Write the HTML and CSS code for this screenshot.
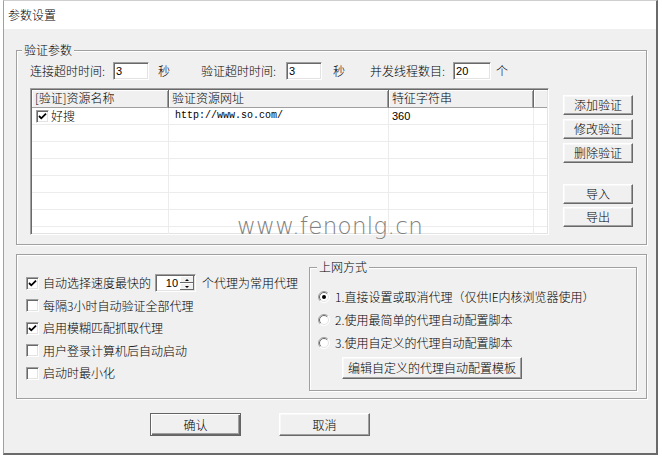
FILE: index.html
```html
<!DOCTYPE html>
<html>
<head>
<meta charset="utf-8">
<title>参数设置</title>
<link rel="stylesheet" href="styles.css">
</head>
<body>
<div class="window">
  <div class="titlebar">参数设置</div>
  <div class="client">
    <div class="group g-verify">
      <div class="legend">验证参数</div>
      <div class="params">
        <span class="lbl l1">连接超时时间:</span><span class="edit e1">3</span><span class="unit u1">秒</span>
        <span class="lbl l2">验证超时时间:</span><span class="edit e2">3</span><span class="unit u2">秒</span>
        <span class="lbl l3">并发线程数目:</span><span class="edit e3">20</span><span class="unit u3">个</span>
      </div>
      <div class="list-area">
        <div class="listview">
          <div class="lv-head">
            <div class="hc c1">[验证]资源名称</div>
            <div class="hc c2">验证资源网址</div>
            <div class="hc c3">特征字符串</div>
            <div class="hc c4"></div>
          </div>
          <div class="lv-row">
            <div class="cell c1 first"><span class="chk on"><svg width="9" height="9" viewBox="0 0 9 9"><path d="M1 4 L3.3 6.3 L8 1.6" fill="none" stroke="#000" stroke-width="1.8"/></svg></span>好搜</div>
            <div class="cell c2 mono">http://www.so.com/</div>
            <div class="cell c3 num">360</div>
            <div class="cell c4"></div>
          </div>
          <div class="lv-row"><div class="cell c1"></div><div class="cell c2"></div><div class="cell c3"></div><div class="cell c4"></div></div>
          <div class="lv-row"><div class="cell c1"></div><div class="cell c2"></div><div class="cell c3"></div><div class="cell c4"></div></div>
          <div class="lv-row"><div class="cell c1"></div><div class="cell c2"></div><div class="cell c3"></div><div class="cell c4"></div></div>
          <div class="lv-row"><div class="cell c1"></div><div class="cell c2"></div><div class="cell c3"></div><div class="cell c4"></div></div>
          <div class="lv-row"><div class="cell c1"></div><div class="cell c2"></div><div class="cell c3"></div><div class="cell c4"></div></div>
          <div class="lv-row"><div class="cell c1"></div><div class="cell c2"></div><div class="cell c3"></div><div class="cell c4"></div></div>
          <div class="lv-row"><div class="cell c1"></div><div class="cell c2"></div><div class="cell c3"></div><div class="cell c4"></div></div>
        </div>
        <div class="side">
          <button class="btn sbtn">添加验证</button>
          <button class="btn sbtn gap4">修改验证</button>
          <button class="btn sbtn gap4">删除验证</button>
          <button class="btn sbtn gap21">导入</button>
          <button class="btn sbtn gap3">导出</button>
        </div>
      </div>
      <div class="watermark">www.fenonlg.cn</div>
    </div>

    <div class="group g-options">
      <div class="checks">
        <div class="crow"><span class="chk on"><svg width="9" height="9" viewBox="0 0 9 9"><path d="M1 4 L3.3 6.3 L8 1.6" fill="none" stroke="#000" stroke-width="1.8"/></svg></span><span>自动选择速度最快的</span><span class="spin"><span class="spin-val">10</span><span class="spin-btns"><span class="sb up"></span><span class="sb down"></span></span></span><span>个代理为常用代理</span></div>
        <div class="crow"><span class="chk"></span><span>每隔3小时自动验证全部代理</span></div>
        <div class="crow"><span class="chk on"><svg width="9" height="9" viewBox="0 0 9 9"><path d="M1 4 L3.3 6.3 L8 1.6" fill="none" stroke="#000" stroke-width="1.8"/></svg></span><span>启用模糊匹配抓取代理</span></div>
        <div class="crow"><span class="chk"></span><span>用户登录计算机后自动启动</span></div>
        <div class="crow"><span class="chk"></span><span>启动时最小化</span></div>
      </div>
      <div class="group g-net">
        <div class="legend">上网方式</div>
        <div class="radios">
          <div class="rrow"><svg class="radio" width="12" height="12" viewBox="0 0 12 12"><circle cx="6" cy="6" r="5.5" fill="#fff"/><path d="M2.1 9.9 A5.5 5.5 0 0 1 9.9 2.1" fill="none" stroke="#a0a0a0"/><path d="M9.9 2.1 A5.5 5.5 0 0 1 2.1 9.9" fill="none" stroke="#fff"/><path d="M2.8 9.2 A4.5 4.5 0 0 1 9.2 2.8" fill="none" stroke="#696969"/><path d="M9.2 2.8 A4.5 4.5 0 0 1 2.8 9.2" fill="none" stroke="#e3e3e3"/><circle cx="6" cy="6" r="2" fill="#000"/></svg><span>1.直接设置或取消代理（仅供IE内核浏览器使用）</span></div>
          <div class="rrow"><svg class="radio" width="12" height="12" viewBox="0 0 12 12"><circle cx="6" cy="6" r="5.5" fill="#fff"/><path d="M2.1 9.9 A5.5 5.5 0 0 1 9.9 2.1" fill="none" stroke="#a0a0a0"/><path d="M9.9 2.1 A5.5 5.5 0 0 1 2.1 9.9" fill="none" stroke="#fff"/><path d="M2.8 9.2 A4.5 4.5 0 0 1 9.2 2.8" fill="none" stroke="#696969"/><path d="M9.2 2.8 A4.5 4.5 0 0 1 2.8 9.2" fill="none" stroke="#e3e3e3"/></svg><span>2.使用最简单的代理自动配置脚本</span></div>
          <div class="rrow"><svg class="radio" width="12" height="12" viewBox="0 0 12 12"><circle cx="6" cy="6" r="5.5" fill="#fff"/><path d="M2.1 9.9 A5.5 5.5 0 0 1 9.9 2.1" fill="none" stroke="#a0a0a0"/><path d="M9.9 2.1 A5.5 5.5 0 0 1 2.1 9.9" fill="none" stroke="#fff"/><path d="M2.8 9.2 A4.5 4.5 0 0 1 9.2 2.8" fill="none" stroke="#696969"/><path d="M9.2 2.8 A4.5 4.5 0 0 1 2.8 9.2" fill="none" stroke="#e3e3e3"/></svg><span>3.使用自定义的代理自动配置脚本</span></div>
          <button class="btn ebtn">编辑自定义的代理自动配置模板</button>
        </div>
      </div>
    </div>

    <div class="footer">
      <button class="btn fbtn default">确认</button>
      <button class="btn fbtn cancel">取消</button>
    </div>
  </div>
</div>
</body>
</html>
```
FILE: styles.css
```css
* { box-sizing: border-box; }
html, body { margin: 0; padding: 0; background: #fff; }
body {
  font-family: "Noto Sans CJK SC", "Noto Sans CJK JP", sans-serif;
  font-size: 12px;
  font-weight: 300;
  line-height: 14px;
  color: #000;
}
.window {
  margin-left: 3px;
  width: 655px;
  height: 455px;
  border-top: 1px solid #cfcfcf;
  border-left: 1px solid #a0a0a0;
  border-right: 2px solid #6a6a6a;
  border-bottom: 2px solid #6a6a6a;
  display: flex;
  flex-direction: column;
}
.titlebar {
  flex: none;
  height: 28px;
  line-height: 28px;
  padding-left: 4px;
  background: #fff;
}
.client {
  flex: 1;
  background: #f0f0f0;
  padding: 21px 0 0 12px;
}
.group {
  border: 1px solid #a0a0a0;
  box-shadow: inset 1px 1px 0 #fff, 1px 1px 0 #fff;
  position: relative;
}
.legend {
  margin: -8px 0 0 5px;
  padding: 0 2px;
  height: 14px;
  line-height: 14px;
  width: max-content;
  background: #f0f0f0;
}
.g-verify { width: 631px; height: 195px; }
.params {
  display: flex;
  align-items: center;
  height: 18px;
  margin: 5px 0 0 13px;
  white-space: nowrap;
}
.lbl { flex: none; }
.l1 { width: 83px; }
.l2 { width: 85px; margin-left: 31px; }
.l3 { width: 83px; margin-left: 25px; }
.edit {
  flex: none;
  height: 18px;
  background: #fff;
  border: 1px solid;
  border-color: #a0a0a0 #fff #fff #a0a0a0;
  box-shadow: inset 1px 1px 0 #696969, inset -1px -1px 0 #e3e3e3;
  padding: 1px 0 0 2px;
  font: 400 11px/14px "Liberation Sans", Arial, sans-serif;
}
.e1, .e2 { width: 36px; }
.e3 { width: 38px; }
.u1 { margin-left: 9px; }
.u2 { margin-left: 11px; }
.u3 { margin-left: 5px; }

.list-area { display: flex; margin: 8px 0 0 13px; }
.listview {
  flex: none;
  width: 519px;
  height: 147px;
  background: #fff;
  border: 1px solid;
  border-color: #a0a0a0 #fff #fff #a0a0a0;
  box-shadow: inset 1px 1px 0 #696969, inset -1px -1px 0 #e3e3e3;
  padding: 1px;
  overflow: hidden;
}
.lv-head { display: flex; height: 18px; }
.hc {
  flex: none;
  height: 18px;
  line-height: 16px;
  padding-left: 3px;
  background: #f0f0f0;
  border-right: 1px solid #696969;
  border-bottom: 1px solid #a0a0a0;
  box-shadow: inset 1px 1px 0 #fff, inset -1px 0 0 #a0a0a0;
  white-space: nowrap;
}
.c1 { width: 137px; }
.c2 { width: 220px; }
.c3 { width: 145px; }
.c4 { flex: 1; }
.hc.c4 { flex: 1; border-right: none; box-shadow: inset 1px 1px 0 #fff; }
.lv-row { display: flex; height: 17px; border-bottom: 1px solid #ececec; }
.cell {
  flex: none;
  height: 16px;
  line-height: 16px;
  border-right: 1px solid #ececec;
  white-space: nowrap;
  display: flex;
  align-items: center;
}
.cell.c4 { flex: 1; border-right: none; }
.cell.first { padding-left: 4px; }
.cell.first .chk { margin-right: 2px; }
.mono { font: 400 10px/16px "Liberation Mono", "DejaVu Sans Mono", monospace; padding-left: 6px; }
.num { font: 400 11px/16px "Liberation Sans", Arial, sans-serif; padding-left: 3px; }

.chk {
  flex: none;
  width: 13px;
  height: 13px;
  background: #fff;
  border: 1px solid;
  border-color: #a0a0a0 #fff #fff #a0a0a0;
  box-shadow: inset 1px 1px 0 #696969, inset -1px -1px 0 #e3e3e3;
  display: flex;
  align-items: center;
  justify-content: center;
}
.chk svg { display: block; }

.side { flex: none; width: 70px; margin: 7px 0 0 14px; display: flex; flex-direction: column; }
.btn {
  font-family: "Noto Sans CJK SC", "Noto Sans CJK JP", sans-serif;
  font-size: 12px;
  font-weight: 300;
  line-height: 14px;
  color: #000;
  background: #f0f0f0;
  border: 1px solid;
  border-color: #fff #696969 #696969 #fff;
  box-shadow: inset -1px -1px 0 #a0a0a0, inset 1px 1px 0 #f8f8f8;
  padding: 0;
  margin: 0;
}
.sbtn { width: 70px; height: 20px; }
.gap4 { margin-top: 4px; }
.gap21 { margin-top: 21px; }
.gap3 { margin-top: 3px; }

.watermark {
  position: absolute;
  left: 220px;
  top: 161px;
  font-family: "DejaVu Sans", sans-serif;
  font-weight: 200;
  font-size: 23px;
  line-height: 28px;
  color: #808080;
  letter-spacing: 0.3px;
  pointer-events: none;
}

.g-options {
  width: 631px;
  height: 145px;
  margin-top: 9px;
  display: flex;
}
.checks { flex: none; width: 292px; padding: 17px 0 0 9px; }
.crow { display: flex; align-items: center; height: 22.5px; white-space: nowrap; }
.crow .chk { margin-right: 4px; }
.spin {
  flex: none;
  display: flex;
  width: 41px;
  height: 18px;
  margin: 0 6px 0 4px;
  background: #fff;
  border: 1px solid;
  border-color: #a0a0a0 #fff #fff #a0a0a0;
  box-shadow: inset 1px 1px 0 #696969, inset -1px -1px 0 #e3e3e3;
  padding: 1px;
}
.spin-val { flex: 1; text-align: right; padding-right: 2px; font: 400 11px/14px "Liberation Sans", Arial, sans-serif; }
.spin-btns { flex: none; width: 14px; display: flex; flex-direction: column; }
.sb {
  flex: 1;
  background: #f0f0f0;
  box-shadow: inset -1px -1px 0 #696969, inset 1px 1px 0 #fff;
  display: flex;
  align-items: center;
  justify-content: center;
}
.sb::after { content: ""; width: 0; height: 0; border-left: 2px solid transparent; border-right: 2px solid transparent; }
.sb.up::after { border-bottom: 2px solid #000; }
.sb.down::after { border-top: 2px solid #000; }

.g-net { flex: none; width: 328px; height: 124px; margin-top: 12px; }
.g-net .legend { margin-left: 7px; }
.radios { margin-top: 11px; padding-left: 8px; }
.rrow { display: flex; align-items: center; height: 23px; white-space: nowrap; }
.radio { flex: none; display: block; margin-right: 5px; }
.ebtn { width: 180px; height: 22px; margin: 3px 0 0 24px; }

.footer { display: flex; margin-top: 14px; padding-left: 134px; }
.fbtn { width: 91px; height: 23px; }
.default {
  border: 1px solid #646464;
  box-shadow: inset 1px 1px 0 #fff, inset -1px -1px 0 #696969, inset -2px -2px 0 #a0a0a0;
}
.cancel { margin-left: 38px; }
```
